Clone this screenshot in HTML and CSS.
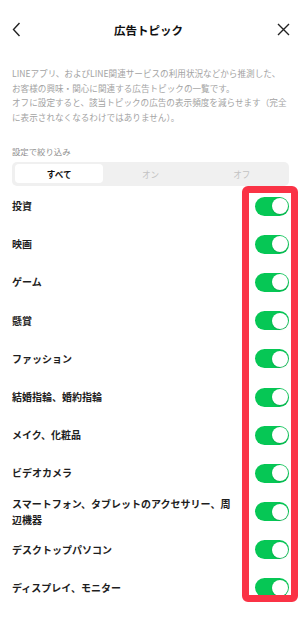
FILE: index.html
```html
<!DOCTYPE html>
<html lang="ja">
<head>
<meta charset="utf-8">
<link rel="stylesheet" href="styles.css">
</head>
<body>
<div class="page">
  <header class="header">
    <svg class="icon back" width="9" height="15" viewBox="0 0 9 15"><path d="M7.5 1 L1.5 7.5 L7.5 14" fill="none" stroke="#222" stroke-width="1.4"/></svg>
    <h1 class="title">広告トピック</h1>
    <svg class="icon close" width="13" height="13" viewBox="0 0 13 13"><path d="M1 1 L12 12 M12 1 L1 12" fill="none" stroke="#222" stroke-width="1.4"/></svg>
  </header>
  <p class="desc">LINEアプリ、およびLINE関連サービスの利用状況などから推測した、<br>お客様の興味・関心に関連する広告トピックの一覧です。<br>オフに設定すると、該当トピックの広告の表示頻度を減らせます（完全<br>に表示されなくなるわけではありません）。</p>
  <div class="filter-label">設定で絞り込み</div>
  <div class="segment">
    <div class="seg active">すべて</div>
    <div class="seg">オン</div>
    <div class="seg">オフ</div>
  </div>
  <ul class="list">
    <li class="row"><span class="label">投資</span><span class="toggle"><span class="knob"></span></span></li>
    <li class="row"><span class="label">映画</span><span class="toggle"><span class="knob"></span></span></li>
    <li class="row"><span class="label">ゲーム</span><span class="toggle"><span class="knob"></span></span></li>
    <li class="row"><span class="label">懸賞</span><span class="toggle"><span class="knob"></span></span></li>
    <li class="row"><span class="label">ファッション</span><span class="toggle"><span class="knob"></span></span></li>
    <li class="row"><span class="label">結婚指輪、婚約指輪</span><span class="toggle"><span class="knob"></span></span></li>
    <li class="row"><span class="label">メイク、化粧品</span><span class="toggle"><span class="knob"></span></span></li>
    <li class="row"><span class="label">ビデオカメラ</span><span class="toggle"><span class="knob"></span></span></li>
    <li class="row"><span class="label">スマートフォン、タブレットのアクセサリー、周辺機器</span><span class="toggle"><span class="knob"></span></span></li>
    <li class="row"><span class="label">デスクトップパソコン</span><span class="toggle"><span class="knob"></span></span></li>
    <li class="row"><span class="label">ディスプレイ、モニター</span><span class="toggle"><span class="knob"></span></span></li>
  </ul>
  <div class="annotation"></div>
</div>
</body>
</html>
```

FILE: styles.css
```css
* { box-sizing: border-box; }
html, body {
  margin: 0;
  padding: 0;
  background: #fff;
}
body {
  font-family: "Noto Sans CJK JP", "Noto Sans", sans-serif;
  color: #222;
  width: 301px;
  height: 620px;
  overflow: hidden;
}
.page {
  position: relative;
  padding: 0 12px;
}
.header {
  height: 58px;
  display: flex;
  align-items: center;
  justify-content: space-between;
}
.icon { display: block; }
.back { margin-left: -0.5px; margin-top: 1px; }
.close { margin-right: -0.5px; margin-top: 1px; }
.title {
  margin: 0;
  font-size: 11.5px;
  font-weight: 700;
  color: #111;
  line-height: 16px;
  margin-top: 1px;
}
.desc {
  margin: 8px 0 0;
  font-size: 8.6px;
  line-height: 14.5px;
  color: #a3a3a3;
  white-space: nowrap;
}
.filter-label {
  margin-top: 20px;
  font-size: 8.4px;
  line-height: 14px;
  color: #8e8e8e;
}
.segment {
  margin-top: 4px;
  height: 24px;
  background: #f0f0f0;
  border-radius: 5px;
  padding: 2px 3px 3px;
  display: grid;
  grid-template-columns: repeat(3, 1fr);
  gap: 3px;
}
.seg {
  display: flex;
  align-items: center;
  justify-content: center;
  font-size: 8.6px;
  color: #c2c2c2;
  border-radius: 4px;
}
.seg.active {
  background: #fff;
  color: #111;
  font-weight: 700;
}
.list {
  list-style: none;
  margin: 1px 0 0;
  padding: 0;
}
.row {
  height: 38.2px;
  display: flex;
  align-items: center;
  justify-content: space-between;
  gap: 18px;
}
.label {
  flex: 1;
  font-size: 10px;
  line-height: 16px;
  font-weight: 700;
  color: #1e1e1e;
}
.toggle {
  flex: none;
  width: 34px;
  height: 19px;
  border-radius: 10px;
  background: #06c755;
  position: relative;
}
.knob {
  position: absolute;
  right: 1.5px;
  top: 1.5px;
  width: 16px;
  height: 16px;
  border-radius: 50%;
  background: #fff;
  box-shadow: 0 0.5px 1.5px rgba(0,0,0,0.2);
}
.annotation {
  position: absolute;
  left: 242px;
  top: 186px;
  width: 56px;
  height: 416px;
  border: 7px solid #fa3346;
  border-radius: 6px;
}
```
